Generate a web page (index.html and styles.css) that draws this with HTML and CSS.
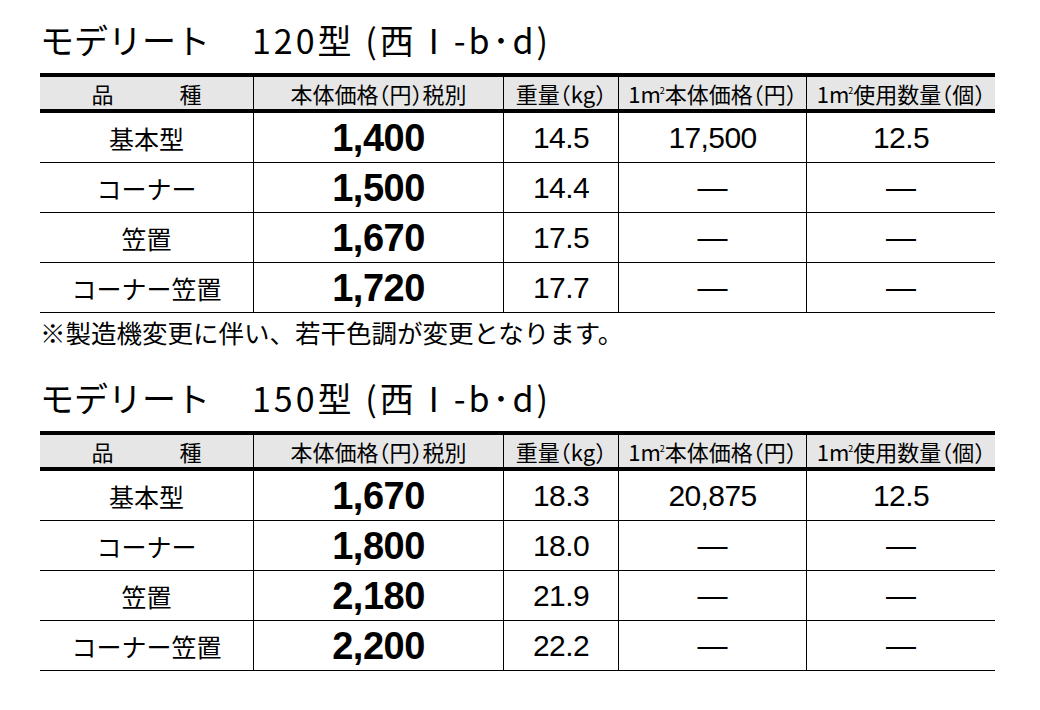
FILE: index.html
```html
<!DOCTYPE html>
<html lang="ja">
<head>
<meta charset="utf-8">
<title>モデリート 価格表</title>
<link rel="stylesheet" href="styles.css">
</head>
<body>
<main class="page">
  <section class="block">
    <h2 class="title">モデリート　<span class="model">120型 (西Ⅰ-b･d)</span></h2>
    <table class="spec">
      <colgroup><col class="c1"><col class="c2"><col class="c3"><col class="c4"><col class="c5"></colgroup>
      <thead>
        <tr><th>品　　　種</th><th>本体価格（円）税別</th><th>重量（kg）</th><th>1m<sup class="sq">2</sup>本体価格（円）</th><th>1m<sup class="sq">2</sup>使用数量（個）</th></tr>
      </thead>
      <tbody>
        <tr><td class="name">基本型</td><td class="price">1,400</td><td class="num">14.5</td><td class="num">17,500</td><td class="num">12.5</td></tr>
        <tr><td class="name">コーナー</td><td class="price">1,500</td><td class="num">14.4</td><td class="dash">—</td><td class="dash">—</td></tr>
        <tr><td class="name">笠置</td><td class="price">1,670</td><td class="num">17.5</td><td class="dash">—</td><td class="dash">—</td></tr>
        <tr><td class="name">コーナー笠置</td><td class="price">1,720</td><td class="num">17.7</td><td class="dash">—</td><td class="dash">—</td></tr>
      </tbody>
    </table>
    <p class="note">※製造機変更に伴い、若干色調が変更となります。</p>
  </section>
  <section class="block second">
    <h2 class="title">モデリート　<span class="model">150型 (西Ⅰ-b･d)</span></h2>
    <table class="spec">
      <colgroup><col class="c1"><col class="c2"><col class="c3"><col class="c4"><col class="c5"></colgroup>
      <thead>
        <tr><th>品　　　種</th><th>本体価格（円）税別</th><th>重量（kg）</th><th>1m<sup class="sq">2</sup>本体価格（円）</th><th>1m<sup class="sq">2</sup>使用数量（個）</th></tr>
      </thead>
      <tbody>
        <tr><td class="name">基本型</td><td class="price">1,670</td><td class="num">18.3</td><td class="num">20,875</td><td class="num">12.5</td></tr>
        <tr><td class="name">コーナー</td><td class="price">1,800</td><td class="num">18.0</td><td class="dash">—</td><td class="dash">—</td></tr>
        <tr><td class="name">笠置</td><td class="price">2,180</td><td class="num">21.9</td><td class="dash">—</td><td class="dash">—</td></tr>
        <tr><td class="name">コーナー笠置</td><td class="price">2,200</td><td class="num">22.2</td><td class="dash">—</td><td class="dash">—</td></tr>
      </tbody>
    </table>
  </section>
</main>
</body>
</html>
```

FILE: styles.css
```css
* { box-sizing: border-box; }

body {
  margin: 0;
  background: #fff;
  color: #000;
  font-family: "Noto Sans CJK JP", "Noto Sans", sans-serif;
}

.page {
  width: 1040px;
  padding: 20px 45px 0 40px;
}

.title {
  margin: 0;
  height: 40px;
  font-size: 34px;
  font-weight: 400;
  line-height: 40px;
  white-space: nowrap;
}

.model {
  margin-left: 8px;
  letter-spacing: 3px;
}

.second { margin-top: 31px; }

.spec {
  width: 955px;
  margin-top: 13px;
  table-layout: fixed;
  border-collapse: separate;
  border-spacing: 0;
}

col.c1 { width: 213px; }
col.c2 { width: 250px; }
col.c3 { width: 115px; }
col.c4 { width: 188px; }
col.c5 { width: 189px; }

.spec th,
.spec td {
  padding: 0;
  text-align: center;
  vertical-align: middle;
  border-left: 1px solid #000;
  white-space: nowrap;
}

.spec th:first-child,
.spec td:first-child { border-left: none; }

.spec th {
  height: 40px;
  background: #e6e6e6;
  border-top: 4px solid #000;
  border-bottom: 4px solid #000;
  font-size: 22px;
  font-weight: 400;
  line-height: 30px;
  font-feature-settings: "halt";
}

.sq {
  font-size: 9px;
  vertical-align: 9px;
  line-height: 0;
  margin-left: -1px;
}

.spec td {
  height: 50px;
  border-bottom: 1px solid #000;
  line-height: 40px;
}

.name { font-size: 25px; }

.price {
  font-family: "Liberation Sans", Arial, sans-serif;
  font-size: 38px;
  font-weight: 700;
  letter-spacing: -0.5px;
}

.num {
  font-family: "Liberation Sans", Arial, sans-serif;
  font-size: 30px;
  letter-spacing: -0.6px;
}

.dash {
  font-family: "Liberation Sans", Arial, sans-serif;
  font-size: 30px;
}

.note {
  margin: 4px 0 0;
  font-size: 25.5px;
  line-height: 30px;
  white-space: nowrap;
}
```
